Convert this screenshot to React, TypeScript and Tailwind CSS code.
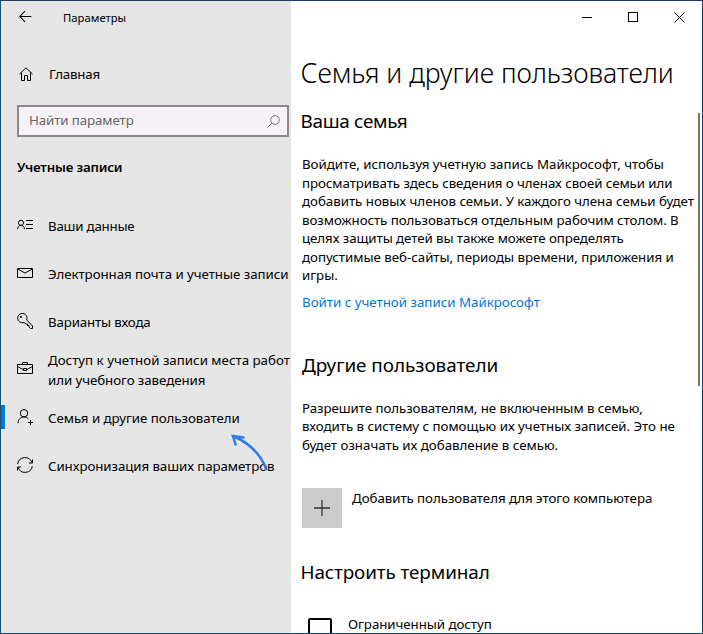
import { FC, ReactNode } from "react";
import clsx from "clsx";

interface ILine {
  text: string;
  className?: string;
}

interface INavItem {
  icon: ReactNode;
  lines: ILine[];
  active?: boolean;
}

const svgProps = {
  width: 16,
  height: 16,
  viewBox: "0 0 16 16",
  fill: "none",
  stroke: "currentColor",
  className: "block shrink-0",
};

const ContactIcon: FC = () => (
  <svg {...svgProps}>
    <circle cx="4" cy="5.8" r="2.600" />
    <path d="M0.500 12.200C0.600 10 2 8.400 4 8.400S7.400 10 7.500 12.200" />
    <path d="M9 3.500h7M9 7.500h7M9 11.500h7" />
  </svg>
);

const MailIcon: FC = () => (
  <svg {...svgProps}>
    <path d="M0.500 3.500h15v9h-15z" />
    <path d="M1 4.200l7 3.800L15 4.200" />
  </svg>
);

const KeyIcon: FC = () => (
  <svg {...svgProps}>
    <path d="M9.700 6.900A4.700 4.700 0 1 0 7 9.500L9 11h1.500v1.500H12V14l1.500 1.500h2V13z" />
    <circle cx="3.900" cy="3.900" r="0.600" fill="currentColor" />
  </svg>
);

const BriefcaseIcon: FC = () => (
  <svg {...svgProps}>
    <path d="M0.500 3.500h15v9h-15zM5.500 3.500v-2h5v2" />
    <path d="M0.500 5.500L6 8.500M10 8.500l5.500-3M6.500 7.500h3v2h-3z" />
  </svg>
);

const UserPlusIcon: FC = () => (
  <svg {...svgProps}>
    <circle cx="7" cy="4.200" r="3.700" />
    <path d="M1 14.200C1.200 10.400 3.600 8 7 8c1.800 0 3.300.7 4.400 2" />
    <path d="M13.500 11v5M11 13.500h5" />
  </svg>
);

const SyncIcon: FC = () => (
  <svg {...svgProps}>
    <path d="M0.700 7A7.300 7.300 0 0 1 14.900 5.700M15.300 9A7.300 7.300 0 0 1 1.100 10.300" />
    <path d="M15.500 2.500v3.500h-3.700M0.500 13.500V10h3.700" />
  </svg>
);

const navItems: INavItem[] = [
  {
    icon: <ContactIcon />,
    lines: [{ text: "Ваши данные", className: "tracking-[-0.22px]" }],
  },
  {
    icon: <MailIcon />,
    lines: [
      {
        text: "Электронная почта и учетные записи",
        className: "tracking-[-0.05px]",
      },
    ],
  },
  {
    icon: <KeyIcon />,
    lines: [{ text: "Варианты входа", className: "tracking-[-0.15px]" }],
  },
  {
    icon: <BriefcaseIcon />,
    lines: [
      { text: "Доступ к учетной записи места работ" },
      { text: "или учебного заведения", className: "tracking-[-0.07px]" },
    ],
  },
  {
    icon: <UserPlusIcon />,
    lines: [
      {
        text: "Семья и другие пользователи",
        className: "tracking-[-0.04px]",
      },
    ],
    active: true,
  },
  {
    icon: <SyncIcon />,
    lines: [
      {
        text: "Синхронизация ваших параметров",
        className: "tracking-[-0.08px]",
      },
    ],
  },
];

const familyText: ILine[] = [
  {
    text: "Войдите, используя учетную запись Майкрософт, чтобы",
    className: "tracking-[-0.02px]",
  },
  {
    text: "просматривать здесь сведения о членах своей семьи или",
    className: "tracking-[-0.06px]",
  },
  {
    text: "добавить новых членов семьи. У каждого члена семьи будет",
    className: "tracking-[-0.02px]",
  },
  {
    text: "возможность пользоваться отдельным рабочим столом. В",
    className: "tracking-[-0.05px]",
  },
  {
    text: "целях защиты детей вы также можете определять",
    className: "tracking-[-0.07px]",
  },
  {
    text: "допустимые веб-сайты, периоды времени, приложения и",
    className: "tracking-[-0.02px]",
  },
  { text: "игры." },
];

const othersText: ILine[] = [
  {
    text: "Разрешите пользователям, не включенным в семью,",
    className: "tracking-[-0.06px]",
  },
  {
    text: "входить в систему с помощью их учетных записей. Это не",
    className: "tracking-[-0.02px]",
  },
  {
    text: "будет означать их добавление в семью.",
    className: "tracking-[-0.01px]",
  },
];

const Lines: FC<{ lines: ILine[] }> = ({ lines }) => (
  <>
    {lines.map(({ text, className }) => (
      <span key={text} className={clsx("block", className)}>
        {text}
      </span>
    ))}
  </>
);

const Paragraph: FC<{ lines: ILine[] }> = ({ lines }) => (
  <p className="text-[13.3px] leading-[18.5px]">
    <Lines lines={lines} />
  </p>
);

const Sidebar: FC = () => (
  <aside className="relative w-[290px] shrink-0 bg-[#e6e6e6]">
    <div className="flex h-8 items-center pl-[18px]">
      <svg width="13" height="12" viewBox="0 0 13 12" fill="none" stroke="currentColor">
        <path d="M0.500 5.500H12.300M6 0.200L0.700 5.500L6 10.800" strokeWidth="1.100" />
      </svg>
      <span className="ml-[31px] pt-0.5 text-[11.3px]">Параметры</span>
    </div>
    <div className="mt-[17px] flex h-12 items-center pl-[18px]">
      <svg width="15" height="15" viewBox="0 0 15 15" fill="none" stroke="currentColor">
        <path d="M0.500 7L7 0.800L13.500 7M2.500 5.500v8h3v-5h3v5h3v-8" />
      </svg>
      <span className="ml-[15px] pt-0.5 text-[13.3px] tracking-[-0.2px]">Главная</span>
    </div>
    <div className="mt-[7px] ml-4 flex h-8 w-[272px] items-center justify-between border-2 border-[#8b898b] bg-[#f7f2f7] pr-[7px] pl-2.5">
      <span className="text-[13.3px] tracking-[-0.1px] text-[#666]">Найти параметр</span>
      <svg width="13" height="13" viewBox="0 0 13 13" fill="none" stroke="#777">
        <circle cx="8" cy="5" r="4.300" />
        <path d="M5 8L0.500 12.500" />
      </svg>
    </div>
    <h2 className="mt-5 ml-4 text-[13.3px] leading-5 font-semibold tracking-[-0.18px]">
      Учетные записи
    </h2>
    <nav className="mt-6">
      {navItems.map(({ icon, lines, active }) => (
        <div key={lines[0].text} className="flex h-12 items-center">
          <span className={clsx("h-6 w-1 shrink-0", active && "bg-[#0078d7]")} />
          <span className="ml-3 shrink-0">{icon}</span>
          <p className="ml-[15px] pt-0.5 text-[13.3px] leading-5 whitespace-nowrap">
            <Lines lines={lines} />
          </p>
        </div>
      ))}
    </nav>
    {/* pointer to the active section */}
    <svg
      className="absolute top-[432px] left-[228px]"
      width="42"
      height="40"
      viewBox="0 0 42 40"
      fill="none"
      stroke="#2b7de9"
      strokeWidth="2.500"
      strokeLinecap="round"
    >
      <path d="M4 3C18 9 31 20 37.300 36" />
      <path d="M14.500 4.600L4 3L6.500 11.500" />
    </svg>
  </aside>
);

const Content: FC = () => (
  <main className="relative flex-1 overflow-hidden bg-white">
    <div className="flex h-8 items-center justify-end">
      <span className="flex w-[46px] justify-center">
        <span className="h-px w-2.5 bg-black" />
      </span>
      <span className="flex w-[46px] justify-center">
        <span className="size-2.5 border border-black" />
      </span>
      <span className="flex w-[46px] pl-[18px]">
        <svg width="11" height="11" viewBox="0 0 11 11" stroke="currentColor">
          <path d="M0.500 0.500l10 10M10.500 0.500l-10 10" />
        </svg>
      </span>
    </div>
    <div className="pl-[9.5px] whitespace-nowrap">
      <h1 className="mt-5 text-[26.7px] leading-10 font-light tracking-[-0.06px]">
        Семья и другие пользователи
      </h1>
      <h2 className="mt-[14px] text-[18.9px] leading-7 tracking-[-0.3px]">Ваша семья</h2>
      <div className="mt-5 pl-[1.5px]">
        <Paragraph lines={familyText} />
        <a className="mt-[7px] block text-[13.3px] leading-5 text-[#0078d7]">
          Войти с учетной записи Майкрософт
        </a>
      </div>
      <h2 className="mt-[39px] pl-[1.5px] text-[18.9px] leading-7 tracking-[-0.04px]">
        Другие пользователи
      </h2>
      <div className="mt-5 pl-[1.5px]">
        <Paragraph lines={othersText} />
        <div className="mt-[34px] flex gap-2.5">
          <span className="flex size-10 items-center justify-center bg-[#ccc]">
            <svg width="16" height="16" viewBox="0 0 16 16" stroke="#333">
              <path d="M0 8h16M8 0v16" strokeWidth="1.300" />
            </svg>
          </span>
          <span className="text-[13.3px] leading-5 tracking-[-0.05px]">
            Добавить пользователя для этого компьютера
          </span>
        </div>
      </div>
      <h2 className="mt-[30px] text-[18.9px] leading-7 tracking-[-0.1px]">Настроить терминал</h2>
      <div className="mt-7 flex pl-[7.5px]">
        <span className="mt-1 size-6 rounded-[2px] border-2 border-black" />
        <span className="ml-4 text-[13.3px] leading-5 tracking-[-0.05px]">
          Ограниченный доступ
        </span>
      </div>
    </div>
    <span className="absolute top-28 right-[2px] h-[273px] w-0.5 bg-[#767676]" />
  </main>
);

export default function App() {
  return (
    <div className="flex h-[634px] w-[703px] overflow-hidden border border-t-[#1d3c5f] border-r-[#1d3c5f] border-b-[#15506f] border-l-[#15506f] font-['Noto_Sans','Open_Sans',sans-serif] text-black">
      <Sidebar />
      <Content />
    </div>
  );
}
